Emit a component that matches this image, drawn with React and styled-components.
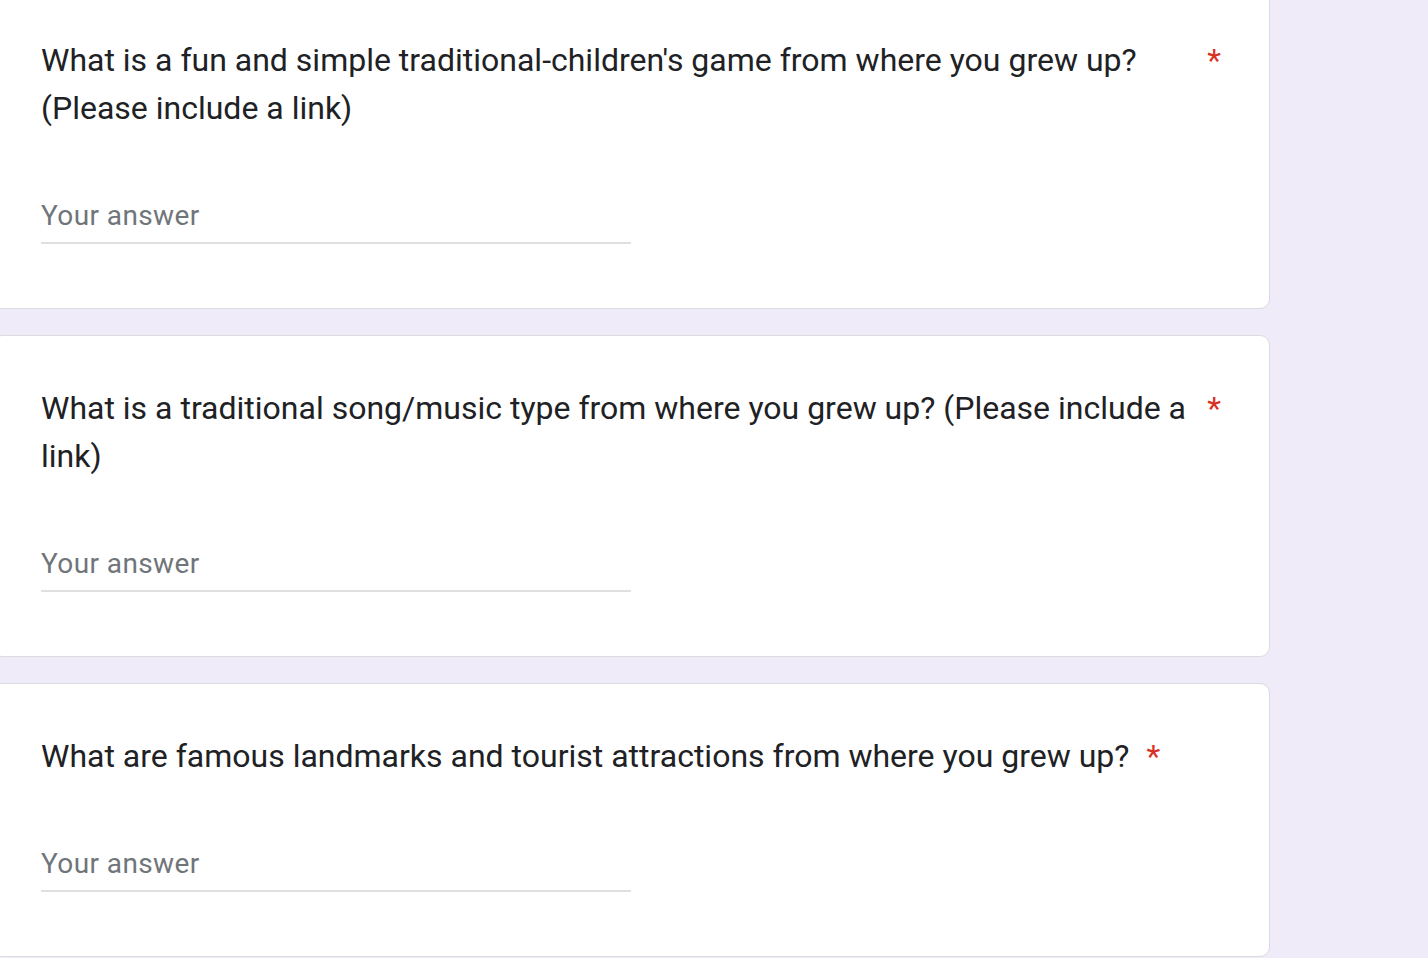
import React from 'react'
import styled, { createGlobalStyle } from 'styled-components'

const GlobalStyle = createGlobalStyle`
    html, body {
        margin: 0;
        padding: 0;
        background: #f0ebf8;
        overflow: hidden;
    }
    body {
        font-family: Roboto, "Liberation Sans", Arial, sans-serif;
        -webkit-font-smoothing: antialiased;
    }
`

const Page = styled.div`
    display: flex;
    flex-direction: column;
    gap: 26px;
    margin: -13px 0 0 -8px;
    width: 1278px;
`

const Card = styled.div`
    background: #fff;
    border: 1px solid #dadce0;
    border-radius: 10px;
    padding: 48px 48px 64px;
`

const Title = styled.div`
    display: flex;
    align-items: flex-start;
    color: #202124;
    font-size: 32px;
    line-height: 48px;
    font-weight: 400;
`

const Required = styled.span`
    flex: none;
    padding-left: 17px;
    color: #d93025;
`

const Answer = styled.input`
    display: block;
    box-sizing: content-box;
    width: 590px;
    height: 40px;
    margin-top: 64px;
    padding: 0 0 6px;
    border: none;
    border-bottom: 2px solid #e0e0e0;
    outline: none;
    background: transparent;
    font-family: Roboto, "Liberation Sans", Arial, sans-serif;
    font-size: 28px;
    line-height: 40px;
    letter-spacing: 0.4px;
    color: #202124;
    &::placeholder {
        color: #70757a;
    }
`

const questions = [
    "What is a fun and simple traditional-children's game from where you grew up? (Please include a link)",
    'What is a traditional song/music type from where you grew up? (Please include a link)',
    'What are famous landmarks and tourist attractions from where you grew up?',
]

function Question ({ text }) {
    return (
        <Card>
            <Title>
                <span>{text}</span>
                <Required>*</Required>
            </Title>
            <Answer placeholder="Your answer" />
        </Card>
    )
}

export default function App () {
    return (
        <>
            <GlobalStyle />
            <Page>
                {questions.map(q => <Question key={q} text={q} />)}
            </Page>
        </>
    )
}
